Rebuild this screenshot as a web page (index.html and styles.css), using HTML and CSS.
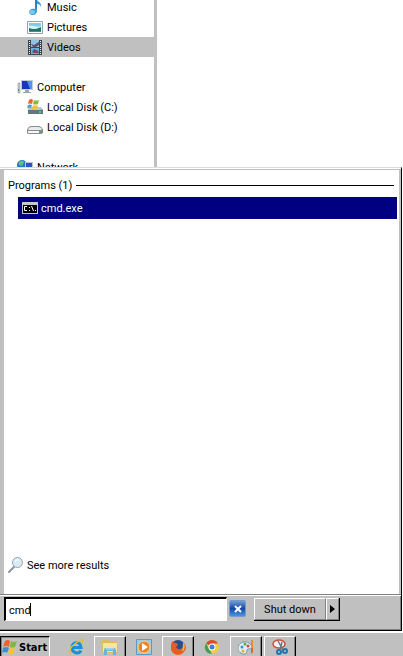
FILE: index.html
```html
<!DOCTYPE html>
<html lang="en">
<head>
<meta charset="utf-8">
<title>Start menu</title>
<link rel="stylesheet" href="styles.css">
</head>
<body>
<nav class="tree" aria-label="Folders">
  <ul class="tree-list">
    <li class="node child"><svg class="icon" viewBox="0 0 16 16"><path d="M8 0h2c0 3 5 3 4 8-1-3-3-3-4-3v7c0 5-8 5-8 1 0-3 4-4 6-3z" fill="#3d9bd6"/><path d="M9 1v9" stroke="#176aa7"/><ellipse cx="5" cy="13" rx="3" ry="2" fill="#7bc8ef"/></svg><span class="label">Music</span></li>
    <li class="node child"><svg class="icon" viewBox="0 0 16 16"><path d="M.5 2.500h15v12H.5z" fill="#fff" stroke="#93a2a6"/><path d="M2 4h12v9H2z" fill="#80c9ec"/><path d="M2 7c4-2 7 2 12 0v3H2z" fill="#d6f2f1"/><path d="M2 9c5 2 8 1 12-1v5H2z" fill="#217368"/><path d="M2 12h12v1H2z" fill="#2b9c91"/></svg><span class="label">Pictures</span></li>
    <li class="node child selected"><svg class="icon" viewBox="0 0 16 16"><path d="M1 1h14v15H1z" fill="#3b464e"/><path d="M4 1h8v7H4z" fill="#8cc4e6"/><path d="M4 9h8v6H4z" fill="#68b0df"/><path d="M4 5l3 1 3-2 2-1v3L9 8H6zM5 13l2-3 4 2 1 2H7z" fill="#6c4d67"/><path d="M2.500 2v13M13.500 2v13" stroke="#e5eaed" stroke-dasharray="1 1"/></svg><span class="label">Videos</span></li>
    <li class="node gap"></li>
    <li class="node"><svg class="icon" viewBox="0 0 16 16"><path d="M1 4h2v10H1z" fill="#c9d2d5" stroke="#788487" stroke-width=".5"/><path d="M1 10h1v2H1z" fill="#3da342"/><path d="M4 1h12v10H4z" fill="#c4ced6"/><path d="M5 2h10v8H5z" fill="#1739b5"/><path d="M10 2h5v8h-2z" fill="#5a91ec"/><path d="M8 11h4v2h2v1H6v-1h2z" fill="#9ba8ad"/></svg><span class="label">Computer</span></li>
    <li class="node child"><svg class="icon" viewBox="0 0 16 16"><path d="M1 8h12l3 3v4H1z" fill="#64777f"/><path d="M1 8h12l2 3H1z" fill="#b9c7cd"/><path d="M12 12h2v2h-2z" fill="#40d65b"/><path d="M2 1q2-2 4 0L5 5Q3 4 1 5z" fill="#ed642d"/><path d="M7 1q2 1 5 0l-1 4q-3 1-5 0z" fill="#8dbb35"/><path d="M1 6q2-1 4 0L4 9Q2 8 0 9z" fill="#499dd9"/><path d="M6 6q2 1 5 0l-1 4q-3 1-5 0z" fill="#f4c134"/></svg><span class="label">Local Disk (C:)</span></li>
    <li class="node child"><svg class="icon" viewBox="0 0 16 16"><path d="M0 11q1-4 5-4h6q4 0 5 4v3q-1 1-3 1H3q-3 0-3-1z" fill="#858c8f"/><path d="M1 10q1-2 4-2h6q3 0 4 2l-1 1H2z" fill="#e9ecec"/><path d="M1 12h11v2H2q-1 0-1-1z" fill="#f7f8f7"/><path d="M13 12h1v2h-1z" fill="#48ac54"/></svg><span class="label">Local Disk (D:)</span></li>
    <li class="node gap"></li>
    <li class="node"><svg class="icon" viewBox="0 0 16 16"><circle cx="5" cy="6" r="5" fill="#2977cd"/><path d="M2 3q3-3 5 0L5 7 2 6z" fill="#5ec282"/><path d="M8 3h8v7H8z" fill="#bdc7ce"/><path d="M9 4h6v5H9z" fill="#2756c5"/></svg><span class="label">Network</span></li>
  </ul>
</nav>
<main class="menu">
  <section class="results">
    <h1 class="heading"><span class="label">Programs (1)</span></h1>
    <a class="program" href="#cmd"><svg class="icon" viewBox="0 0 16 16"><path d="M0 2h16v12H0z" fill="#c5c9cf"/><path d="M1 5h14v8H1z" fill="#000"/><path d="M5 6.500H2.500v4H5M7.500 7v1M7.500 10v1M9.500 6l2 5M13.500 10v1" fill="none" stroke="#fff"/></svg><span class="label">cmd.exe</span></a>
    <a class="more" href="#results"><svg class="icon" viewBox="0 0 16 16"><path d="M6 10l-5 5" stroke="#8c969a" stroke-width="2" stroke-linecap="round"/><circle cx="9.500" cy="5.500" r="5" fill="#d7ecf8" stroke="#96a3ad"/><path d="M7 5q1-3 4-2" fill="none" stroke="#fff"/></svg><span class="label">See more results</span></a>
  </section>
  <form class="footer">
    <div class="field">
      <input class="search" type="text" value="cmd" aria-label="Search programs and files">
      <span class="caret"></span>
    </div>
    <button class="clear" type="button" aria-label="Clear search"><svg viewBox="0 0 10 10"><path d="M2 2l6 6M8 2L2 8" stroke="#fff" stroke-width="2"/></svg></button>
    <div class="power">
      <button class="shutdown" type="button">Shut down</button>
      <button class="arrow" type="button" aria-label="Shut down options"><svg viewBox="0 0 5 8"><path d="M0 0l5 4-5 4z"/></svg></button>
    </div>
  </form>
</main>
<footer class="taskbar">
  <button class="start" type="button"><svg class="icon" viewBox="0 0 16 16"><path d="M3 2q3-2 5 0L7 8Q4 6 1 8z" fill="#e96532"/><path d="M9 2q3 2 6 0l-2 6q-3 1-5 0z" fill="#80b83d"/><path d="M1 9q3-2 6 0l-2 5q-2-2-5 0z" fill="#398ed5"/><path d="M8 9q2 1 5 0l-2 6q-3 1-5-1z" fill="#f5c431"/></svg><span class="label">Start</span></button>
  <button class="task" type="button" aria-label="Internet Explorer"><svg class="icon" viewBox="0 0 16 16"><path d="M13 11.500c-2 4-9 3-9-3s8-7 9 0H4" fill="none" stroke="#1d8fd6" stroke-width="3"/><path d="M3 14C-1 15 2 8 8 4c5-4 8-4 6 0" fill="none" stroke="#e8ba36" stroke-width="1.500"/></svg></button>
  <button class="task open" type="button" aria-label="Windows Explorer"><svg class="icon" viewBox="0 0 16 16"><path d="M0 3l1-2h5l1 1h7l2 2v10H0z" fill="#e0bc57"/><path d="M1 4h14v9H1z" fill="#f8e69c"/><path d="M2 16v-5q0-2 2-2h8q2 0 2 2v5h-3v-4H5v4z" fill="#62b7df"/><path d="M4 10h8" stroke="#c4edfa"/></svg></button>
  <button class="task" type="button" aria-label="Media Player"><svg class="icon" viewBox="0 0 16 16"><path d="M.5.5h15v15H.5z" fill="#9fc9e2" stroke="#6298bd"/><circle cx="8" cy="8" r="6" fill="#ee8420" stroke="#ffd08c"/><path d="M6 4l6 4-6 4z" fill="#fff"/></svg></button>
  <button class="task open" type="button" aria-label="Firefox"><svg class="icon" viewBox="0 0 16 16"><circle cx="8" cy="8" r="7" fill="#254f93"/><path d="M2 2l2 2q3-1 4 2L6 8q2 4 6 1 3-2 1-6 6 6 0 11c-5 4-12 1-12-5Q1 5 2 2z" fill="#e45d24"/><path d="M13 3q4 6-1 10 1-4 1-10z" fill="#f6b83b"/></svg></button>
  <button class="task" type="button" aria-label="Chrome"><svg class="icon" viewBox="0 0 16 16"><circle cx="8" cy="8" r="7" fill="#efcc42"/><path d="M8 8L2 4.500Q4 1 8 1t6 3.500H8z" fill="#d94838"/><path d="M2 4.500l4 7L8 15C2 15-1 9 2 4.500z" fill="#3c9e58"/><circle cx="8" cy="8" r="3.500" fill="#fff"/><circle cx="8" cy="8" r="2.500" fill="#3d7fd4"/></svg></button>
  <button class="task open" type="button" aria-label="Paint"><svg class="icon" viewBox="0 0 16 16"><path d="M0 9c0-5 7-8 11-5s3 6-1 6c-2 0 0 4-3 5-4 0-7-2-7-6z" fill="#e2edf3" stroke="#7498ad"/><circle cx="4" cy="8" r="1.500" fill="#3795d5"/><circle cx="7" cy="5" r="1.500" fill="#52aa49"/><circle cx="10" cy="7" r="1.500" fill="#d94938"/><circle cx="5" cy="12" r="1.500" fill="#e2b22c"/><path d="M14 1v8" stroke="#df9138" stroke-width="2"/><path d="M13 9h2v4l-2 2z" fill="#c86f32"/></svg></button>
  <button class="task open" type="button" aria-label="Snipping Tool"><svg class="icon" viewBox="0 0 16 16"><ellipse cx="7" cy="5" rx="6" ry="4" fill="#f7f3f1" stroke="#ce4f3e" stroke-width="1.500"/><path d="M6 2l5 9M10 3l-2 8" stroke="#69777e" stroke-width="1.500"/><ellipse cx="7" cy="13" rx="2" ry="2" fill="none" stroke="#2673ac" stroke-width="2"/><ellipse cx="13" cy="12" rx="2" ry="2" fill="none" stroke="#2673ac" stroke-width="2"/></svg></button>
</footer>
</body>
</html>
```
FILE: styles.css
```css
* { box-sizing: border-box; }
body {
  margin: 0;
  height: 100vh;
  display: flex;
  flex-direction: column;
  overflow: hidden;
  background: #fff;
  color: #000;
  font: 11px/14px Tahoma, Roboto, sans-serif;
}
button, input { font: inherit; color: inherit; border-radius: 0; margin: 0; padding: 0; }
a { color: inherit; text-decoration: none; }
.icon { width: 16px; height: 16px; flex: none; }
.label { padding-top: 2px; }

.tree { height: 167px; width: 157px; flex: none; overflow: hidden; border-right: 3px solid #c0c0c0; }
.tree-list { list-style: none; margin: -3px 0 0; padding: 0; }
.node { display: flex; align-items: center; gap: 4px; height: 20px; padding-left: 17px; white-space: nowrap; }
.child { padding-left: 27px; }
.selected { background: #c0c0c0; }

.menu {
  flex: 1;
  min-height: 0;
  display: flex;
  flex-direction: column;
  margin-right: 1px;
  border-top: 1px solid #dcdcdc;
  border-right: 1px solid #000;
  border-bottom: 1px solid #000;
}
.results {
  flex: 1;
  display: flex;
  flex-direction: column;
  margin-top: 1px;
  padding: 7px 2px 21px 4px;
  border: solid #c0c0c0;
  border-width: 1px 2px 0 4px;
}
.heading { display: flex; align-items: center; gap: 4px; margin: 0 3px 4px 0; font-size: 11px; font-weight: normal; }
.heading::after { content: ""; flex: 1; height: 1px; background: #000; }
.program { display: flex; align-items: center; gap: 3px; height: 22px; margin-left: 10px; padding-left: 4px; background: #000080; color: #fff; }
.more { display: flex; align-items: center; gap: 3px; margin-top: auto; }

.footer {
  display: flex;
  align-items: flex-start;
  margin: 0;
  padding: 2px 4px 9px;
  border-top: 1px solid #808080;
  background: #c0c0c0;
  box-shadow: inset 0 1px #fff, inset -1px -1px #808080;
}
.field { position: relative; display: flex; }
.search { width: 223px; height: 24px; padding: 2px 3px 0; border: solid; border-width: 2px 1px 1px 2px; border-color: #000 #fff #fff #000; background: #fff; outline: none; }
.caret { position: absolute; left: 26px; top: 6px; width: 1px; height: 13px; background: #000; }
.clear { display: grid; place-items: center; width: 17px; height: 17px; margin: 3px 8px 0 2px; border: 1px solid #7899c9; border-radius: 2px; background: linear-gradient(#6ba0df, #1746a4 50%, #409ae0); }
.clear svg { width: 10px; height: 10px; }
.power { display: flex; margin-top: 1px; border: 1px solid #000; border-width: 0 1px 1px 0; }
.shutdown, .arrow { height: 22px; border: 1px solid; border-color: #fff #808080 #808080 #fff; background: #c0c0c0; }
.shutdown { width: 72px; padding-top: 2px; }
.arrow { display: grid; place-items: center; width: 13px; }
.arrow svg { width: 5px; height: 8px; }

.taskbar { display: flex; align-items: flex-start; height: 25px; flex: none; padding-top: 3px; border-top: 2px solid #fff; background: #c0c0c0; overflow: hidden; }
.start, .task { display: flex; align-items: center; height: 24px; flex: none; padding-bottom: 3px; border: 1px solid transparent; background: none; }
.start { gap: 1px; width: 50px; margin-right: 10px; padding-left: 1px; border-color: #000 #fff #fff #000; box-shadow: inset 1px 1px #808080; font-family: "DejaVu Sans Condensed", "Noto Sans", sans-serif; font-weight: bold; }
.task { justify-content: center; width: 32px; margin-right: 2px; }
.open { border-color: #fff #000 #000 #fff; box-shadow: inset -1px 0 #808080; }
```
